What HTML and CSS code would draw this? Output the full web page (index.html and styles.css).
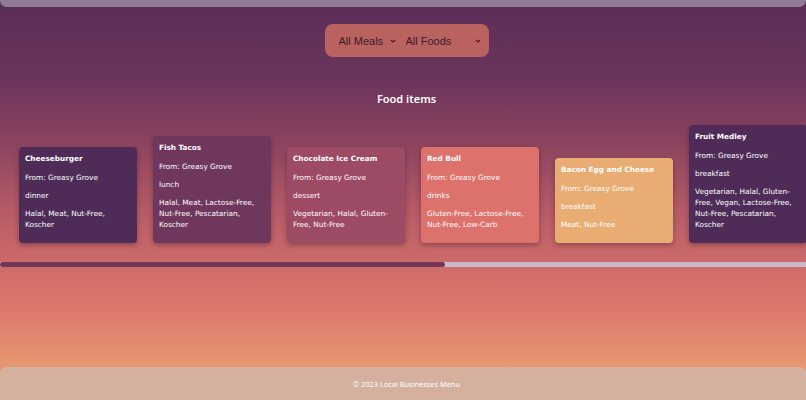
FILE: index.html
```html
<!DOCTYPE html>
<html lang="en">
<head>
    <meta charset="UTF-8">
    <meta name="viewport" content="width=device-width, initial-scale=1.0">
    <title>Local Businesses Menu</title>
    <link rel="stylesheet" href="styles.css">
</head>
<body>
    <header class="topbar"></header>

    <main class="content">
        <div class="filters">
            <div class="select-wrap">
                <select class="filter-select meals">
                    <option>All Meals</option>
                    <option>breakfast</option>
                    <option>lunch</option>
                    <option>dinner</option>
                    <option>dessert</option>
                    <option>drinks</option>
                </select>
                <svg class="chevron" width="6" height="4" viewBox="0 0 6 4"><path d="M0.8 0.8 L3 3 L5.2 0.8" fill="none" stroke="#3b1c2c" stroke-width="1.1"/></svg>
            </div>
            <div class="select-wrap">
                <select class="filter-select foods">
                    <option>All Foods</option>
                    <option>Vegetarian</option>
                    <option>Vegan</option>
                    <option>Halal</option>
                    <option>Koscher</option>
                </select>
                <svg class="chevron" width="6" height="4" viewBox="0 0 6 4"><path d="M0.8 0.8 L3 3 L5.2 0.8" fill="none" stroke="#3b1c2c" stroke-width="1.1"/></svg>
            </div>
        </div>

        <h2 class="section-title">Food items</h2>

        <div class="food-list">
            <div class="food-card c1">
                <h3>Cheeseburger</h3>
                <p>From: Greasy Grove</p>
                <p>dinner</p>
                <p>Halal, Meat, Nut-Free, Koscher</p>
            </div>
            <div class="food-card c2">
                <h3>Fish Tacos</h3>
                <p>From: Greasy Grove</p>
                <p>lunch</p>
                <p>Halal, Meat, Lactose-Free, Nut-Free, Pescatarian, Koscher</p>
            </div>
            <div class="food-card c3">
                <h3>Chocolate Ice Cream</h3>
                <p>From: Greasy Grove</p>
                <p>dessert</p>
                <p>Vegetarian, Halal, Gluten-Free, Nut-Free</p>
            </div>
            <div class="food-card c4">
                <h3>Red Bull</h3>
                <p>From: Greasy Grove</p>
                <p>drinks</p>
                <p>Gluten-Free, Lactose-Free, Nut-Free, Low-Carb</p>
            </div>
            <div class="food-card c5">
                <h3>Bacon Egg and Cheese</h3>
                <p>From: Greasy Grove</p>
                <p>breakfast</p>
                <p>Meat, Nut-Free</p>
            </div>
            <div class="food-card c1">
                <h3>Fruit Medley</h3>
                <p>From: Greasy Grove</p>
                <p>breakfast</p>
                <p>Vegetarian, Halal, Gluten-Free, Vegan, Lactose-Free, Nut-Free, Pescatarian, Koscher</p>
            </div>
            <div class="food-card c2">
                <h3>Pancake Stack</h3>
                <p>From: Sunny Side Diner</p>
                <p>breakfast</p>
                <p>Vegetarian, Nut-Free</p>
            </div>
            <div class="food-card c3">
                <h3>Caesar Salad</h3>
                <p>From: Green Bowl</p>
                <p>lunch</p>
                <p>Vegetarian, Halal, Nut-Free</p>
            </div>
            <div class="food-card c4">
                <h3>Iced Coffee</h3>
                <p>From: Bean Corner</p>
                <p>drinks</p>
                <p>Vegan, Gluten-Free, Nut-Free</p>
            </div>
            <div class="food-card c5">
                <h3>Veggie Wrap</h3>
                <p>From: Green Bowl</p>
                <p>lunch</p>
                <p>Vegetarian, Vegan, Halal</p>
            </div>
            <div class="food-card c1">
                <h3>Apple Pie</h3>
                <p>From: Sunny Side Diner</p>
                <p>dessert</p>
                <p>Vegetarian, Nut-Free</p>
            </div>
        </div>
        <div class="scroll-track">
            <div class="scroll-thumb"></div>
        </div>
    </main>

    <footer class="footer">
        <p>&copy; 2023 Local Businesses Menu</p>
    </footer>
</body>
</html>
```

FILE: styles.css
```css
html, body {
    margin: 0;
    height: 100%;
}
body {
    font-family: "DejaVu Sans", "Noto Sans", sans-serif;
    color: white;
    min-height: 100vh;
    display: flex;
    flex-direction: column;
    background: linear-gradient(#5a2d57 0%, #6c355b 20%, #8a425f 35%, #b45a66 52%, #cc6a6a 65%, #dd7a6e 78%, #e59470 90%, #eaa474 100%);
}
.topbar {
    height: 7px;
    background-color: #8f7b96;
    border-radius: 0 0 8px 8px;
}
.content {
    flex: 1;
    display: flex;
    flex-direction: column;
    align-items: center;
    min-width: 0;
    padding-left: 7px;
}
.filters {
    margin-top: 17px;
    height: 33px;
    padding: 0 8px 0 10px;
    display: flex;
    align-items: center;
    gap: 6px;
    background-color: #ba625f;
    border-radius: 8px;
}
.select-wrap {
    display: flex;
    align-items: center;
}
.filter-select {
    appearance: none;
    border: none;
    background: transparent;
    font-family: "Liberation Sans", Arial, sans-serif;
    font-size: 11px;
    color: #3b1c2c;
    padding: 0 4px;
    outline: none;
}
.meals {
    width: 56px;
}
.foods {
    width: 74px;
}
.chevron {
    margin-left: -1px;
}
.section-title {
    margin: 34px 0 0;
    font-family: "Noto Sans", sans-serif;
    font-size: 11px;
    font-weight: 600;
}
.food-list {
    align-self: stretch;
    margin-left: -7px;
    display: flex;
    align-items: flex-end;
    gap: 16px;
    padding: 19px 0 19px 19px;
    overflow: hidden;
}
.scroll-track {
    align-self: stretch;
    margin-left: -7px;
    height: 5px;
    background-color: #cab7ca;
}
.scroll-thumb {
    width: 445px;
    height: 100%;
    background-color: #72355c;
    border-radius: 3px;
}
.food-card {
    flex: 0 0 118px;
    box-sizing: border-box;
    padding: 5px 6px 6px;
    border-radius: 4px;
    box-shadow: 0 2px 5px rgba(40, 10, 30, 0.35);
}
.food-card h3 {
    margin: 0 0 7px;
    font-size: 7.3px;
    font-weight: bold;
    line-height: 13px;
}
.food-card p {
    margin: 0 0 7px;
    font-size: 7.35px;
    line-height: 11px;
}
.c1 {
    background-color: #4e2c57;
}
.c2 {
    background-color: #6f375c;
}
.c3 {
    background-color: #9d4a65;
}
.c4 {
    background-color: #dd716c;
}
.c5 {
    background-color: #e9ad74;
}
.footer {
    height: 33px;
    display: flex;
    align-items: center;
    justify-content: center;
    padding-left: 7px;
    background-color: #d5b09f;
    border-radius: 6px 6px 0 0;
}
.footer p {
    margin: 0;
    font-family: "Noto Sans", sans-serif;
    font-size: 7.4px;
}
```
